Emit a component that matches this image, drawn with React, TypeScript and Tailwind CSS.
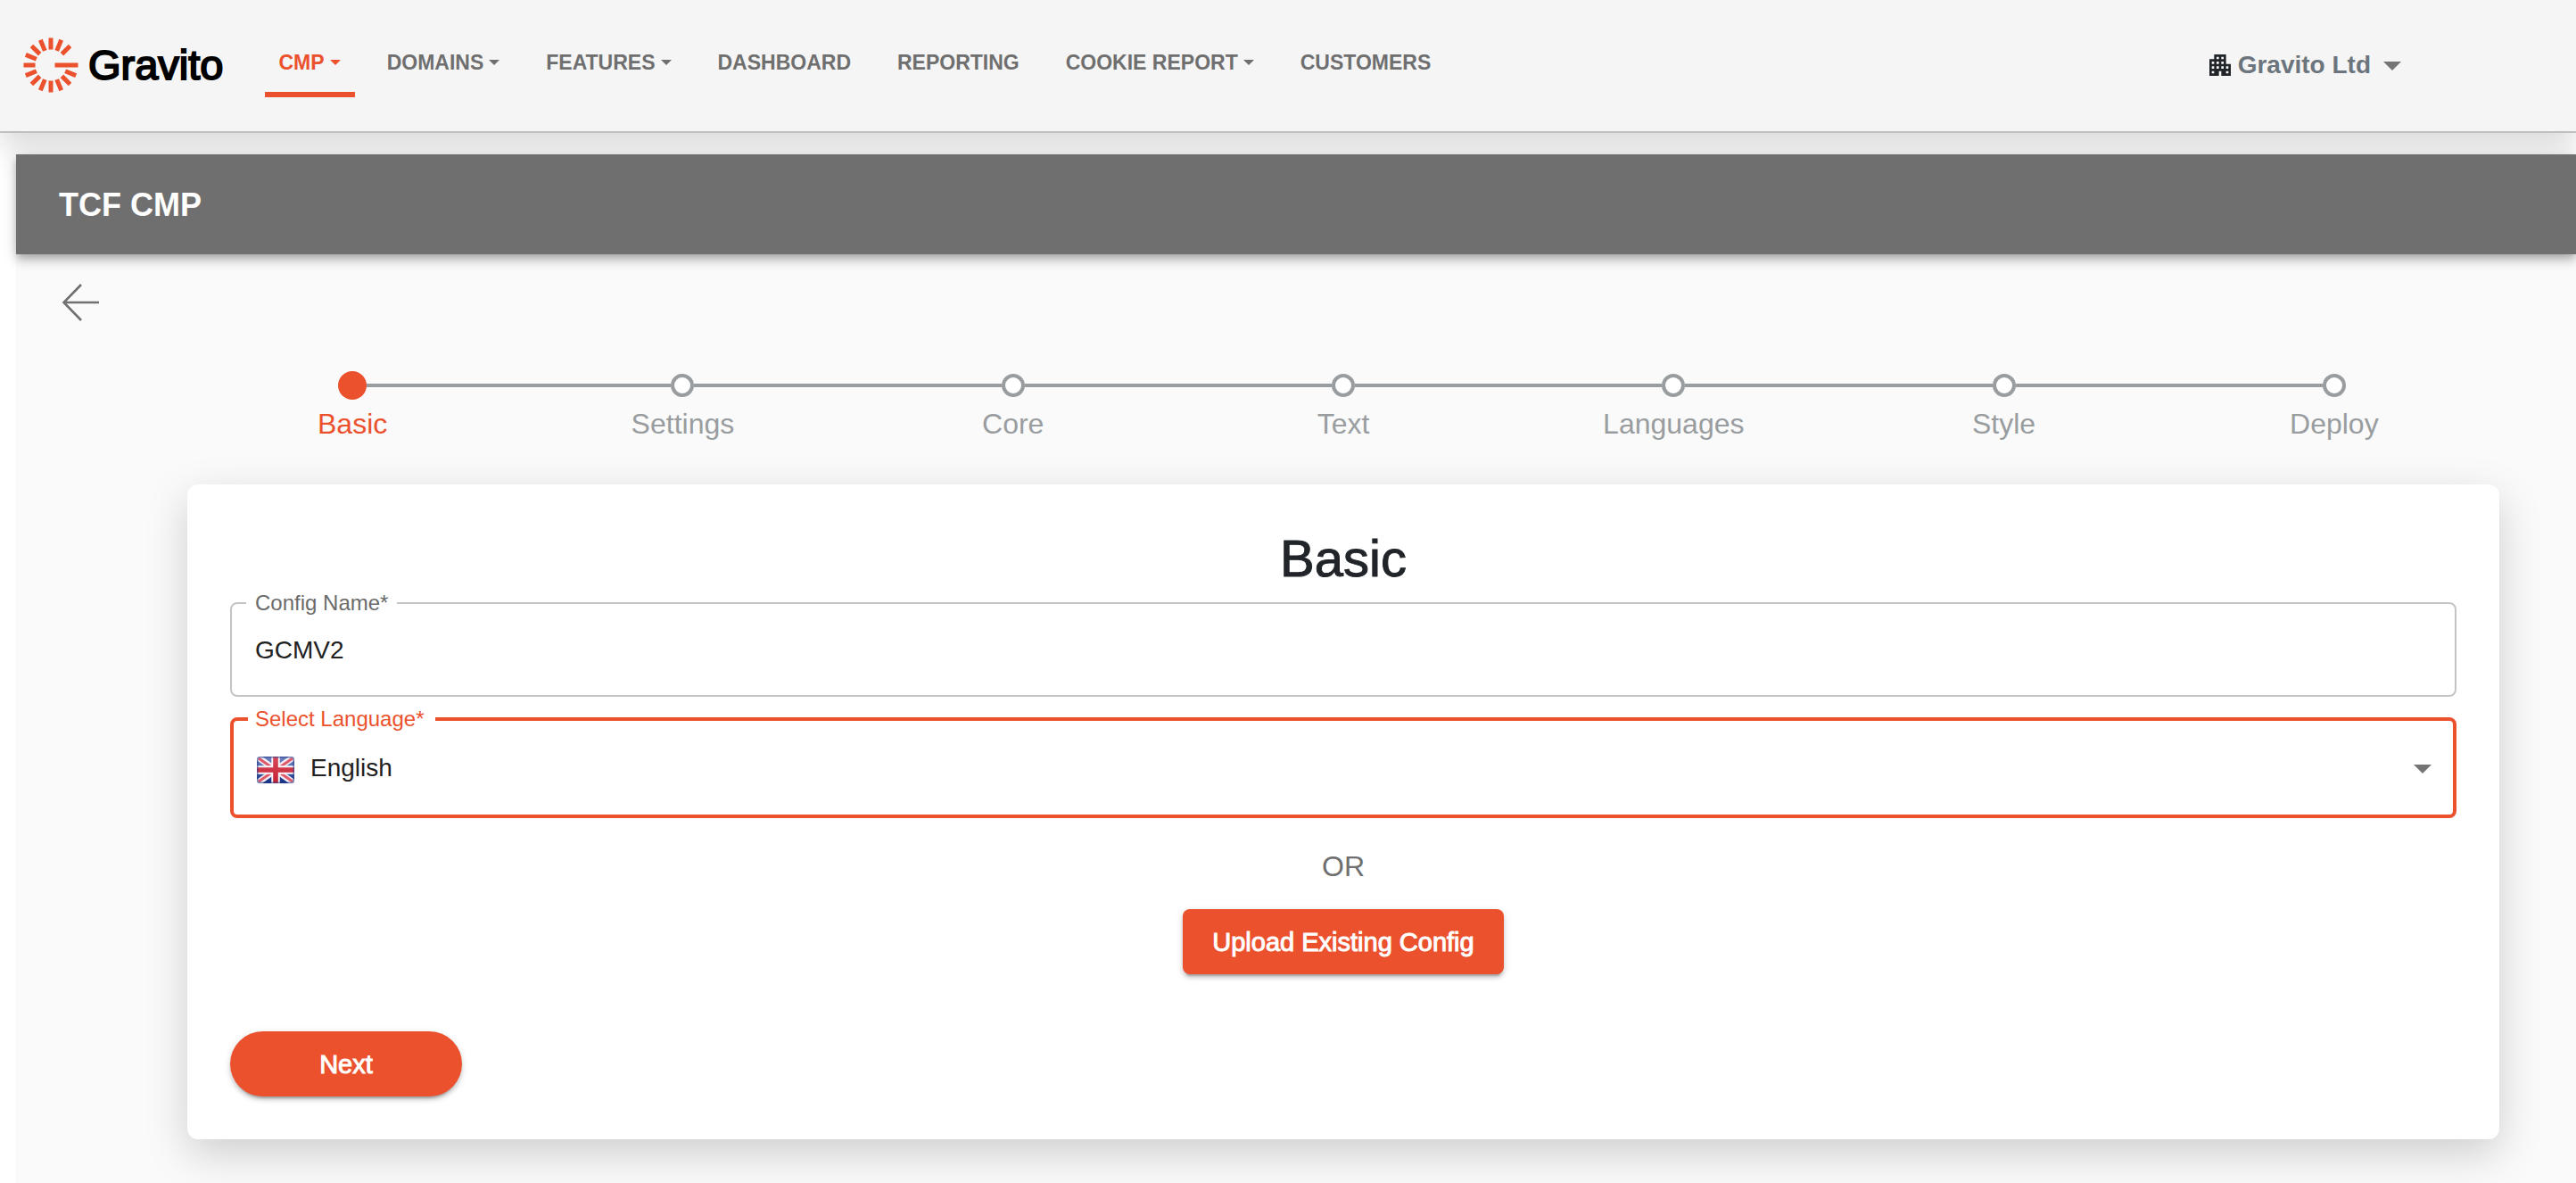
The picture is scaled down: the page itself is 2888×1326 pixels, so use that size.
import { MdApartment, MdArrowDropDown } from "react-icons/md";

type NavItem = { label: string; menu?: boolean; active?: boolean };

const navItems: NavItem[] = [
  { label: "CMP", menu: true, active: true },
  { label: "DOMAINS", menu: true },
  { label: "FEATURES", menu: true },
  { label: "DASHBOARD" },
  { label: "REPORTING" },
  { label: "COOKIE REPORT", menu: true },
  { label: "CUSTOMERS" },
];

const steps = ["Basic", "Settings", "Core", "Text", "Languages", "Style", "Deploy"];

// Ray angles in degrees, clockwise from the top; the bar of the G sits at 90.
const rayAngles = [0, 22.5, 45, 112.5, 135, 157.5, 180, 202.5, 225, 247.5, 270, 292.5, 315, 337.5];

function Logo() {
  return (
    <a href="#home" className="flex items-center gap-[11px]">
      <svg className="size-[62px] shrink-0" viewBox="-31 -31 62 62" fill="#eb512d" aria-hidden="true">
        {rayAngles.map((a) => (
          <rect key={a} x={-2.5} y={-30.5} width={5} height={13} transform={`rotate(${a})`} />
        ))}
        <rect x={4.5} y={-2.5} width={26} height={5} />
      </svg>
      <span className="text-[47px] leading-[56px] text-black [-webkit-text-stroke:2px_#000]">Gravito</span>
    </a>
  );
}

function NavLink({ label, menu, active }: NavItem) {
  return (
    <a
      href="#nav"
      aria-current={active ? "page" : undefined}
      className={`flex items-center gap-1.5 whitespace-nowrap border-b-6 px-4 pb-[15px] pt-4 text-[23px] font-bold leading-9 ${
        active ? "border-[#eb512d] text-[#eb512d]" : "border-transparent text-[#6f6f6f]"
      }`}
    >
      {label}
      {menu && (
        <svg className="h-1.5 w-3" viewBox="0 0 12 6" fill="currentColor" aria-hidden="true">
          <path d="M0 0h12L6 6z" />
        </svg>
      )}
    </a>
  );
}

function Stepper() {
  return (
    <ol className="grid grid-cols-7">
      {steps.map((step, i) => (
        <li key={step} className="flex flex-col items-center gap-[3px]">
          <div className="flex h-8 w-full items-center">
            <span className={`h-1 flex-1 ${i > 0 ? "bg-[#999d9f]" : ""}`} />
            <span
              className={
                i === 0 ? "size-8 rounded-full bg-[#eb512d]" : "size-[26px] rounded-full border-4 border-[#999d9f] bg-white"
              }
            />
            <span className={`h-1 flex-1 ${i < steps.length - 1 ? "bg-[#999d9f]" : ""}`} />
          </div>
          <span className={`text-[32px] leading-[48px] ${i === 0 ? "text-[#eb512d]" : "text-[#999da0]"}`}>{step}</span>
        </li>
      ))}
    </ol>
  );
}

function UkFlag() {
  return (
    <svg className="mt-1 h-[30px] w-[42px] shrink-0" viewBox="0 0 42 30" aria-hidden="true">
      <defs>
        <clipPath id="flag-shape">
          <rect width="42" height="30" rx="3" />
        </clipPath>
        <linearGradient id="flag-blue" x1="0" y1="0" x2="0" y2="1">
          <stop offset="0" stopColor="#6f82bd" />
          <stop offset="0.5" stopColor="#4f68ad" />
          <stop offset="1" stopColor="#0f2a80" />
        </linearGradient>
        <linearGradient id="flag-red" x1="0" y1="0" x2="0" y2="1">
          <stop offset="0" stopColor="#d84a5a" />
          <stop offset="1" stopColor="#c41f33" />
        </linearGradient>
      </defs>
      <g clipPath="url(#flag-shape)">
        <rect width="42" height="30" fill="url(#flag-blue)" />
        <path d="M0 0L42 30M42 0L0 30" stroke="#f1eef4" strokeWidth="7" />
        <path d="M2 2L15 11M40 2L27 11M2 28L15 19M40 28L27 19" stroke="#e0596b" strokeWidth="3" />
        <path d="M21 0V30M0 15H42" stroke="#f7f5f8" strokeWidth="9.5" />
        <path d="M18.2 0h5.6v12.2H42v5.6H23.800v12.200h-5.600V17.800H0v-5.600h18.200z" fill="url(#flag-red)" />
        <rect x="0.75" y="0.75" width="40.5" height="28.5" rx="2.5" fill="none" stroke="#2b3f8c" strokeOpacity="0.6" strokeWidth="1.5" />
      </g>
    </svg>
  );
}

export default function App() {
  return (
    <div className="flex min-h-screen flex-col bg-white font-['Liberation_Sans',Arial,sans-serif] text-[#212529]">
      <header className="flex items-center border-b-2 border-[#c0c0c0] bg-[#f5f5f5] pb-[38px] pl-[26px] pr-[182px] pt-9 shadow-[0_16px_32px_rgba(0,0,0,0.15)]">
        <Logo />
        <nav aria-label="Main" className="ml-[46px] flex gap-5">
          {navItems.map((item) => (
            <NavLink key={item.label} {...item} />
          ))}
        </nav>
        <button type="button" aria-haspopup="listbox" className="ml-auto flex items-center text-[28px] font-bold leading-[42px] text-[#6c757d]">
          <MdApartment className="mr-1 size-8 text-[#212529]" />
          Gravito Ltd
          <MdArrowDropDown className="size-12 text-[#757575]" />
        </button>
      </header>

      <main className="ml-[18px] mt-6 grow bg-[#fafafa] pb-[49px]">
        <h1 className="bg-[#6f6f6f] px-12 pb-[31px] pt-[33px] text-[36px] font-bold leading-[48px] text-white shadow-[0_4px_8px_-2px_rgba(0,0,0,0.2),0_8px_10px_rgba(0,0,0,0.14),0_2px_20px_rgba(0,0,0,0.12)]">
          TCF CMP
        </h1>

        <button type="button" aria-label="Back" className="ml-[50px] mt-[31px] block">
          <svg className="size-[46px]" viewBox="0 0 46 46" fill="none" stroke="#707070" strokeWidth="2.6" aria-hidden="true">
            <path d="M23 3L3.500 23L23 43M3.500 23H43" />
          </svg>
        </button>

        <div className="pl-48 pr-[86px] pt-[54px]">
          <Stepper />

          <section className="mt-11 flex flex-col rounded-xl bg-white p-12 shadow-[0_16px_48px_rgba(0,0,0,0.175)]">
            <h2 className="text-center text-[58px] leading-[70px] [-webkit-text-stroke:1px_#212529]">Basic</h2>

            <fieldset className="rounded-lg border-2 border-[#c4c4c4] pb-[13px]">
              <legend className="ml-4 px-2.5 text-[24px] leading-[30px] text-[#6b6b6b]">
                <label htmlFor="config-name">Config Name*</label>
              </legend>
              <input
                id="config-name"
                type="text"
                defaultValue="GCMV2"
                className="block h-[75px] w-full bg-transparent px-[26px] text-[28px] text-[#212121] outline-none"
              />
            </fieldset>

            <fieldset className="mt-2.5 rounded-lg border-4 border-[#eb512d] pb-3">
              <legend className="ml-4 pl-2 pr-3 text-[24px] leading-[30px] text-[#eb512d]">
                <label htmlFor="language">Select Language*</label>
              </legend>
              <div className="relative flex h-20 items-center gap-[18px] pl-[26px] pr-3">
                <UkFlag />
                <select id="language" className="h-full flex-1 appearance-none bg-transparent text-[28px] text-[#212121] outline-none">
                  <option>English</option>
                </select>
                <MdArrowDropDown className="pointer-events-none absolute right-2.5 size-12 text-[#757575]" aria-hidden="true" />
              </div>
            </fieldset>

            <p className="mt-[30px] text-center text-[32px] leading-[48px] text-[#6f6f6f]">OR</p>

            <button
              type="button"
              className="mt-6 self-center rounded-lg bg-[#eb512d] px-[33px] pt-px text-[29px] leading-[72px] text-white [-webkit-text-stroke:1px_#fff] shadow-[0_6px_2px_-4px_rgba(0,0,0,0.2),0_4px_4px_rgba(0,0,0,0.14),0_2px_10px_rgba(0,0,0,0.12)]"
            >
              Upload Existing Config
            </button>

            <button
              type="button"
              className="mt-16 w-[260px] self-start rounded-full bg-[#eb512d] pt-px text-[29px] leading-[72px] text-white [-webkit-text-stroke:1px_#fff] shadow-[0_6px_2px_-4px_rgba(0,0,0,0.2),0_4px_4px_rgba(0,0,0,0.14),0_2px_10px_rgba(0,0,0,0.12)]"
            >
              Next
            </button>
          </section>
        </div>
      </main>
    </div>
  );
}
